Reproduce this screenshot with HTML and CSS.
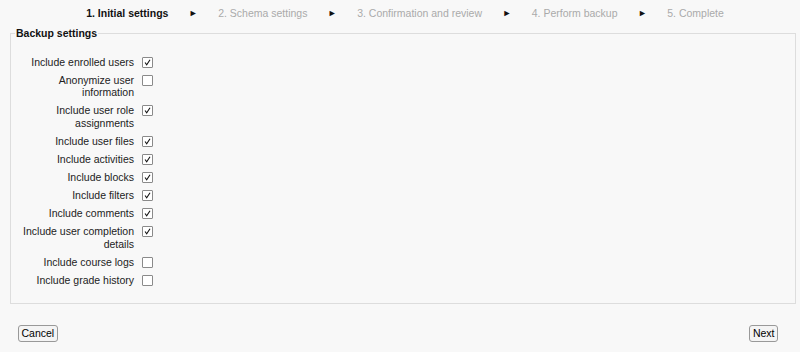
FILE: index.html
```html
<!DOCTYPE html>
<html>
<head>
<meta charset="utf-8">
<link rel="stylesheet" href="styles.css">
</head>
<body>
<div class="steps">
  <span class="step current">1. Initial settings</span><span class="arrow">&#9658;</span>
  <span class="step">2. Schema settings</span><span class="arrow">&#9658;</span>
  <span class="step">3. Confirmation and review</span><span class="arrow">&#9658;</span>
  <span class="step">4. Perform backup</span><span class="arrow">&#9658;</span>
  <span class="step">5. Complete</span>
</div>
<form class="form">
  <fieldset class="box">
    <legend class="legend">Backup settings</legend>
    <div class="row"><label class="lbl">Include enrolled users</label><span class="cb on"><svg viewBox="0 0 11 11"><path d="M2.5 5.5 L4.5 8.2 L8.6 2.2"/></svg></span></div>
    <div class="row"><label class="lbl">Anonymize user information</label><span class="cb"></span></div>
    <div class="row"><label class="lbl">Include user role assignments</label><span class="cb on"><svg viewBox="0 0 11 11"><path d="M2.5 5.5 L4.5 8.2 L8.6 2.2"/></svg></span></div>
    <div class="row"><label class="lbl">Include user files</label><span class="cb on"><svg viewBox="0 0 11 11"><path d="M2.5 5.5 L4.5 8.2 L8.6 2.2"/></svg></span></div>
    <div class="row"><label class="lbl">Include activities</label><span class="cb on"><svg viewBox="0 0 11 11"><path d="M2.5 5.5 L4.5 8.2 L8.6 2.2"/></svg></span></div>
    <div class="row"><label class="lbl">Include blocks</label><span class="cb on"><svg viewBox="0 0 11 11"><path d="M2.5 5.5 L4.5 8.2 L8.6 2.2"/></svg></span></div>
    <div class="row"><label class="lbl">Include filters</label><span class="cb on"><svg viewBox="0 0 11 11"><path d="M2.5 5.5 L4.5 8.2 L8.6 2.2"/></svg></span></div>
    <div class="row"><label class="lbl">Include comments</label><span class="cb on"><svg viewBox="0 0 11 11"><path d="M2.5 5.5 L4.5 8.2 L8.6 2.2"/></svg></span></div>
    <div class="row"><label class="lbl">Include user completion details</label><span class="cb on"><svg viewBox="0 0 11 11"><path d="M2.5 5.5 L4.5 8.2 L8.6 2.2"/></svg></span></div>
    <div class="row"><label class="lbl">Include course logs</label><span class="cb"></span></div>
    <div class="row"><label class="lbl">Include grade history</label><span class="cb"></span></div>
  </fieldset>
  <div class="buttons">
    <button type="button" class="btn">Cancel</button>
    <button type="button" class="btn">Next</button>
  </div>
</form>
</body>
</html>
```
FILE: styles.css
```css
html, body {
  margin: 0;
  padding: 0;
  background: #f8f8f8;
  font-family: "Liberation Sans", Arial, sans-serif;
  font-size: 10.5px;
  color: #222;
}
.steps {
  display: flex;
  justify-content: center;
  align-items: center;
  height: 25px;
  padding-left: 10px;
}
.step {
  color: #aaa;
}
.step.current {
  color: #111;
  font-weight: bold;
}
.arrow {
  color: #111;
  font-size: 9px;
  margin: 0 20.4px;
}
.form {
  margin: 0;
}
.box {
  margin: 2px 4px 0 10px;
  padding: 14px 0 14px 0;
  border: 1px solid #ddd;
}
.legend {
  font-weight: bold;
  color: #111;
  padding: 0 1px;
  margin-left: 4px;
  font-size: 10.5px;
}
.row {
  display: flex;
  align-items: flex-start;
  padding: 2.6px 0;
  line-height: 12.8px;
}
.lbl {
  width: 114px;
  margin-left: 9px;
  text-align: right;
  color: #222;
}
.cb {
  display: block;
  box-sizing: border-box;
  width: 11px;
  height: 11px;
  margin: 1px 0 0 8px;
  background: #fff;
  border: 1px solid #8a8a8a;
  border-radius: 1px;
}
.cb svg {
  display: block;
  width: 9px;
  height: 9px;
}
.cb path {
  fill: none;
  stroke: #111;
  stroke-width: 1.3;
}
.buttons {
  display: flex;
  justify-content: space-between;
  margin: 21px 22px 0 18px;
}
.btn {
  font-family: "Liberation Sans", Arial, sans-serif;
  font-size: 10.5px;
  color: #000;
  background: #f4f4f4;
  border: 1px solid #999;
  border-radius: 3px;
  padding: 1px 2.5px;
  height: 17px;
  line-height: 13px;
}
```
